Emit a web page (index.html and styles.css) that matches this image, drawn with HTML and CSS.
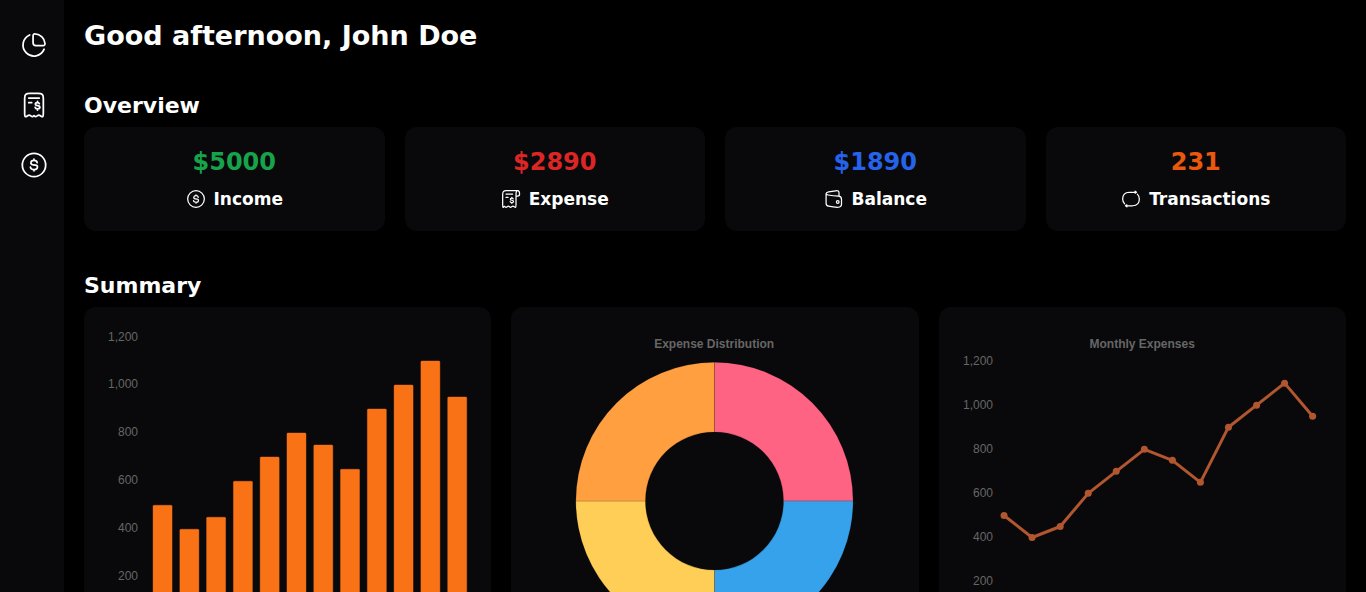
FILE: index.html
```html
<!DOCTYPE html>
<html lang="en">
<head>
<meta charset="utf-8">
<title>Dashboard</title>
<link rel="stylesheet" href="styles.css">
</head>
<body>
<svg class="defs" aria-hidden="true">
  <symbol id="coin" viewBox="0 0 24 24">
    <circle cx="12" cy="12" r="10"/>
    <path d="M14.7 10.06C14.6 9.3 13.74 8.07 12.16 8.07C10.33 8.07 9.56 9.08 9.4 9.59C9.16 10.26 9.21 11.66 11.35 11.81C14.04 12 15.11 12.32 14.97 13.96C14.84 15.6 13.34 15.95 12.16 15.91C10.98 15.88 9.05 15.33 8.97 13.87M11.97 7V8.07M11.97 15.9V17"/>
  </symbol>
  <symbol id="pie" viewBox="0 0 24 24">
    <path d="M8.3 3.4A9.4 9.4 0 1 0 20.7 15.6"/>
    <path d="M11.2 4.1C11.2 3 11.8 2.4 12.9 2.5C17.5 2.8 21.1 6.2 21.4 10.6C21.5 11.9 20.9 12.5 19.8 12.5H13.6C11.9 12.5 11.2 11.8 11.2 10.1Z"/>
  </symbol>
  <symbol id="receipt" viewBox="0 0 24 24">
    <path d="M4 18.6V6.5C4 3 5 2 8.5 2H15.5C19 2 20 3 20 6.5V18.6C20 20.9 20 21.7 19.4 22C18.6 22.3 17.2 20.6 16.2 20.6C15 20.6 14.4 22 13.3 22C12.6 22 12.4 21 12 21C11.6 21 11.4 22 10.7 22C9.6 22 9 20.6 7.8 20.6C6.8 20.6 5.4 22.3 4.6 22C4 21.7 4 20.9 4 18.6Z"/>
    <path d="M7.5 6H16.5M7.5 10H10M16.6 10.9C16.4 10.2 15.8 9.9 15 9.9C13.9 9.9 13.2 10.4 13.2 11.2C13.2 12.1 13.9 12.4 15 12.5C16.3 12.6 17 13 17 13.9C17 14.8 16.2 15.3 15 15.3C14 15.3 13.2 14.9 13 14.1M15 8.9V9.9M15 15.3V16.3"/>
  </symbol>
  <symbol id="scroll" viewBox="0 0 24 24">
    <path d="M20 2C18.8 2 18 4 18 7V18.6C18 20.9 18 21.8 17.4 22C16.6 22.3 15.4 20.6 14.4 20.6C13.2 20.6 12.4 22 11.4 22C10.4 22 10 20.6 8.8 20.6C7.8 20.6 7.2 22 6 22C5.2 22 4.8 20.6 4 20.9C3.2 21.2 2.8 22.2 2.4 21.9C2 21.6 2 20.6 2 18.6V7C2 3.2 2.7 2 6.5 2H20C21.4 2 22.3 3.6 22.3 6C22.3 8 21.8 8.5 20 8.5H18"/>
    <path d="M6 6H14M6 10H8.5M14.6 11.9C14.4 11.2 13.8 10.9 13 10.9C11.9 10.9 11.2 11.4 11.2 12.2C11.2 13.1 11.9 13.4 13 13.5C14.3 13.6 15 14 15 14.9C15 15.8 14.2 16.3 13 16.3C12 16.3 11.2 15.9 11 15.1M13 9.9V10.9M13 16.3V17.3"/>
  </symbol>
  <symbol id="wallet" viewBox="0 0 24 24">
    <path d="M2.5 5.6V17C2.5 19.4 3.2 20.1 5.5 20.6C9 21.4 12.5 22 17 21.9C20 21.8 21 20.8 21 18V12.5C21 9.6 20.2 8.6 17.4 8.5C12.5 8.4 9 8 5 7.2C3.2 6.8 2.5 6.3 2.5 5.6C2.5 4.3 3.8 3.9 5.5 3.5L14 2.2C17 1.8 18 2.3 18 4.8V8.5"/>
    <circle cx="16.5" cy="15.5" r="1.6"/>
  </symbol>
  <symbol id="repeat" viewBox="0 0 24 24">
    <path d="M16.9 2.6L18.6 3.9L17 5M18.4 3.9H10C5 4.1 2 7 2 12C2 14.3 2.8 16.4 4.4 17.9M7.1 21.4L5.4 20.1L7 19M5.6 20.1H14C19 19.9 22 17 22 12C22 9.7 21.2 7.6 19.6 6.1"/>
  </symbol>
</svg>

<div class="app">
  <nav class="sidebar" aria-label="Main">
    <a class="nav-link" href="#" aria-label="Dashboard"><svg class="icon icon-lg"><use href="#pie"/></svg></a>
    <a class="nav-link" href="#" aria-label="Expenses"><svg class="icon icon-lg"><use href="#receipt"/></svg></a>
    <a class="nav-link" href="#" aria-label="Income"><svg class="icon icon-lg"><use href="#coin"/></svg></a>
  </nav>

  <main class="main">
    <h1 class="greeting">Good afternoon, John Doe</h1>

    <section class="section">
      <h2 class="section-title">Overview</h2>
      <div class="stats">
        <article class="card stat">
          <p class="stat-value green">$5000</p>
          <p class="stat-label"><svg class="icon"><use href="#coin"/></svg>Income</p>
        </article>
        <article class="card stat">
          <p class="stat-value red">$2890</p>
          <p class="stat-label"><svg class="icon"><use href="#scroll"/></svg>Expense</p>
        </article>
        <article class="card stat">
          <p class="stat-value blue">$1890</p>
          <p class="stat-label"><svg class="icon"><use href="#wallet"/></svg>Balance</p>
        </article>
        <article class="card stat">
          <p class="stat-value orange">231</p>
          <p class="stat-label"><svg class="icon"><use href="#repeat"/></svg>Transactions</p>
        </article>
      </div>
    </section>

    <section class="section">
      <h2 class="section-title">Summary</h2>
      <div class="charts">
        <div class="card">
          <svg class="chart" viewBox="0 0 367 367" role="img" aria-label="Expenses by month, bars">
            <g class="tick">
              <text x="34" y="14">1,200</text>
              <text x="34" y="61">1,000</text>
              <text x="34" y="109">800</text>
              <text x="34" y="157">600</text>
              <text x="34" y="205">400</text>
              <text x="34" y="253">200</text>
            </g>
            <g class="bars">
              <rect x="49" y="178" width="19" height="119" rx="1"/>
              <rect x="75.8" y="202" width="19" height="95" rx="1"/>
              <rect x="102.5" y="190" width="19" height="107" rx="1"/>
              <rect x="129.3" y="154" width="19" height="143" rx="1"/>
              <rect x="156" y="130" width="19" height="167" rx="1"/>
              <rect x="182.8" y="106" width="19" height="191" rx="1"/>
              <rect x="209.6" y="118" width="19" height="179" rx="1"/>
              <rect x="236.3" y="142" width="19" height="155" rx="1"/>
              <rect x="263.1" y="82" width="19" height="215" rx="1"/>
              <rect x="289.8" y="58" width="19" height="239" rx="1"/>
              <rect x="316.6" y="34" width="19" height="263" rx="1"/>
              <rect x="343.4" y="70" width="19" height="227" rx="1"/>
            </g>
          </svg>
        </div>
        <div class="card">
          <svg class="chart" viewBox="0 0 367 367" role="img" aria-label="Expense distribution">
            <text class="chart-title" x="183" y="21">Expense Distribution</text>
            <g class="slices">
              <path fill="#ff6384" d="M183.3 35.3A138.5 138.5 0 0 1 321.8 173.8H252.3A69 69 0 0 0 183.3 104.8Z"/>
              <path fill="#36a2eb" d="M321.8 173.8A138.5 138.5 0 0 1 183.3 312.3V242.8A69 69 0 0 0 252.3 173.8Z"/>
              <path fill="#ffce56" d="M183.3 312.3A138.5 138.5 0 0 1 44.8 173.8H114.3A69 69 0 0 0 183.3 242.8Z"/>
              <path fill="#ff9f40" d="M44.8 173.8A138.5 138.5 0 0 1 183.3 35.3V104.8A69 69 0 0 0 114.3 173.8Z"/>
            </g>
          </svg>
        </div>
        <div class="card">
          <svg class="chart" viewBox="0 0 367 367" role="img" aria-label="Monthly expenses, line">
            <text class="chart-title" x="183" y="21">Monthly Expenses</text>
            <g class="tick">
              <text x="34" y="38">1,200</text>
              <text x="34" y="82">1,000</text>
              <text x="34" y="126">800</text>
              <text x="34" y="170">600</text>
              <text x="34" y="214">400</text>
              <text x="34" y="258">200</text>
            </g>
            <polyline class="line" points="45,188.3 73,210.3 101.1,199.3 129.1,166.2 157.1,144.2 185.2,122.2 213.2,133.2 241.2,155.2 269.2,100.1 297.3,78.1 325.3,56.1 353.3,89.1"/>
            <g class="dots">
              <circle cx="45" cy="188.3" r="3.5"/><circle cx="73" cy="210.3" r="3.5"/>
              <circle cx="101.1" cy="199.3" r="3.5"/><circle cx="129.1" cy="166.2" r="3.5"/>
              <circle cx="157.1" cy="144.2" r="3.5"/><circle cx="185.2" cy="122.2" r="3.5"/>
              <circle cx="213.2" cy="133.2" r="3.5"/><circle cx="241.2" cy="155.2" r="3.5"/>
              <circle cx="269.2" cy="100.1" r="3.5"/><circle cx="297.3" cy="78.1" r="3.5"/>
              <circle cx="325.3" cy="56.1" r="3.5"/><circle cx="353.3" cy="89.1" r="3.5"/>
            </g>
          </svg>
        </div>
      </div>
    </section>
  </main>
</div>
</body>
</html>
```
FILE: styles.css
```css
* {
  box-sizing: border-box;
  margin: 0;
}

body {
  background: #000;
  color: #fff;
  font-family: "DejaVu Sans", Verdana, sans-serif;
}

.defs {
  display: none;
}

.app {
  display: flex;
  height: 100vh;
}

.sidebar {
  flex: none;
  display: flex;
  flex-direction: column;
  gap: 32px;
  width: 64px;
  padding: 31px 16px 20px 20px;
  background: #09090b;
}

.nav-link {
  display: block;
  height: 28px;
  color: inherit;
}

.icon {
  flex: none;
  display: block;
  width: 20px;
  height: 20px;
  fill: none;
  stroke: currentColor;
  stroke-width: 1.5;
  stroke-linecap: round;
  stroke-linejoin: round;
}

.icon-lg {
  width: 28px;
  height: 28px;
}

.main {
  flex: 1;
  min-width: 0;
  padding: 20px;
  overflow-y: auto;
  scrollbar-width: none;
}

.greeting {
  font-size: 27px;
  line-height: 31px;
  font-weight: 700;
}

.section {
  margin-top: 40px;
}

.section-title {
  margin-bottom: 6px;
  font-size: 22px;
  line-height: 30px;
  font-weight: 700;
}

.stats,
.charts {
  display: grid;
  gap: 20px;
}

.stats {
  grid-template-columns: repeat(4, 1fr);
}

.charts {
  grid-template-columns: repeat(3, 1fr);
}

.card {
  padding: 20px;
  border-radius: 12px;
  background: #09090b;
}

.stat {
  display: flex;
  flex-direction: column;
  align-items: center;
  gap: 10px;
}

.stat-value {
  font-size: 24px;
  line-height: 30px;
  font-weight: 700;
}

.green { color: #16a34a; }
.red { color: #dc2626; }
.blue { color: #2563eb; }
.orange { color: #ea580c; }

.stat-label {
  display: flex;
  align-items: center;
  gap: 8px;
  font-size: 17px;
  line-height: 24px;
  font-weight: 700;
}

.chart {
  display: block;
  width: 100%;
  font-family: "Liberation Sans", Arial, sans-serif;
  font-size: 12px;
}

.tick,
.chart-title {
  fill: #666;
}

.tick {
  text-anchor: end;
}

.chart-title {
  font-weight: 700;
  text-anchor: middle;
}

.bars {
  fill: #f97316;
  stroke: #f97316;
  stroke-opacity: 0.4;
}

.slices {
  stroke: #000;
  stroke-opacity: 0.15;
}

.line {
  fill: none;
  stroke: #b1562f;
  stroke-width: 3;
  stroke-linejoin: round;
}

.dots {
  fill: #b1562f;
}
```
